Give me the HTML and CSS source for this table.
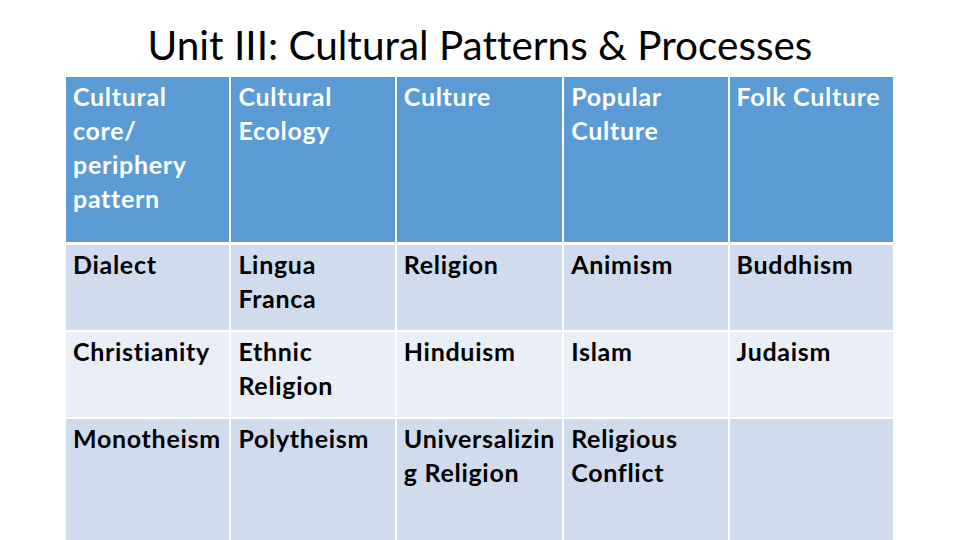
FILE: index.html
```html
<!DOCTYPE html>
<html lang="en">
<head>
<meta charset="utf-8">
<title>Unit III: Cultural Patterns &amp; Processes</title>
<link rel="stylesheet" href="styles.css">
</head>
<body>
<main class="slide">
  <h1 class="title"><span class="title-text">Unit III: Cultural Patterns &amp; Processes</span></h1>
  <div class="table">
    <div class="cell head">Cultural<br>core/<br>periphery<br>pattern</div>
    <div class="cell head">Cultural<br>Ecology</div>
    <div class="cell head">Culture</div>
    <div class="cell head">Popular<br>Culture</div>
    <div class="cell head">Folk Culture</div>

    <div class="cell band1">Dialect</div>
    <div class="cell band1">Lingua<br>Franca</div>
    <div class="cell band1">Religion</div>
    <div class="cell band1">Animism</div>
    <div class="cell band1">Buddhism</div>

    <div class="cell band2">Christianity</div>
    <div class="cell band2">Ethnic<br>Religion</div>
    <div class="cell band2">Hinduism</div>
    <div class="cell band2">Islam</div>
    <div class="cell band2">Judaism</div>

    <div class="cell band1">Monotheism</div>
    <div class="cell band1">Polytheism</div>
    <div class="cell band1">Universalizin<br>g Religion</div>
    <div class="cell band1">Religious<br>Conflict</div>
    <div class="cell band1"></div>
  </div>
</main>
</body>
</html>
```

FILE: styles.css
```css
html, body {
  margin: 0;
  padding: 0;
  background: #ffffff;
}

.slide {
  width: 960px;
  height: 540px;
  overflow: hidden;
  background: #ffffff;
}

.title {
  box-sizing: border-box;
  height: 77px;
  margin: 0;
  padding-top: 21px;
  display: flex;
  justify-content: center;
  font-family: Lato, "Liberation Sans", sans-serif;
  font-weight: 400;
  font-size: 40.5px;
  line-height: 48px;
  font-variant-ligatures: none;
  color: #000000;
}

.title-text {
  display: inline-block;
  white-space: nowrap;
}

.table {
  margin-left: 66px;
  width: 827px;
  display: grid;
  grid-template-columns: repeat(5, 1fr);
  grid-template-rows: 166px 85px 85px 130px;
  column-gap: 2px;
  row-gap: 2px;
  background: #ffffff;
}

.cell {
  box-sizing: border-box;
  padding: 2px 7px 0 7px;
  font-family: Lato, "Liberation Sans", sans-serif;
  font-weight: 700;
  font-size: 25px;
  letter-spacing: 0.7px;
  line-height: 34px;
  font-variant-ligatures: none;
  white-space: nowrap;
  color: #000000;
}

.head {
  background: #5b9bd5;
  color: #ffffff;
  margin-bottom: 1px;
}

.band1 {
  background: #d0dcee;
}

.band2 {
  background: #e9eef7;
}
```
